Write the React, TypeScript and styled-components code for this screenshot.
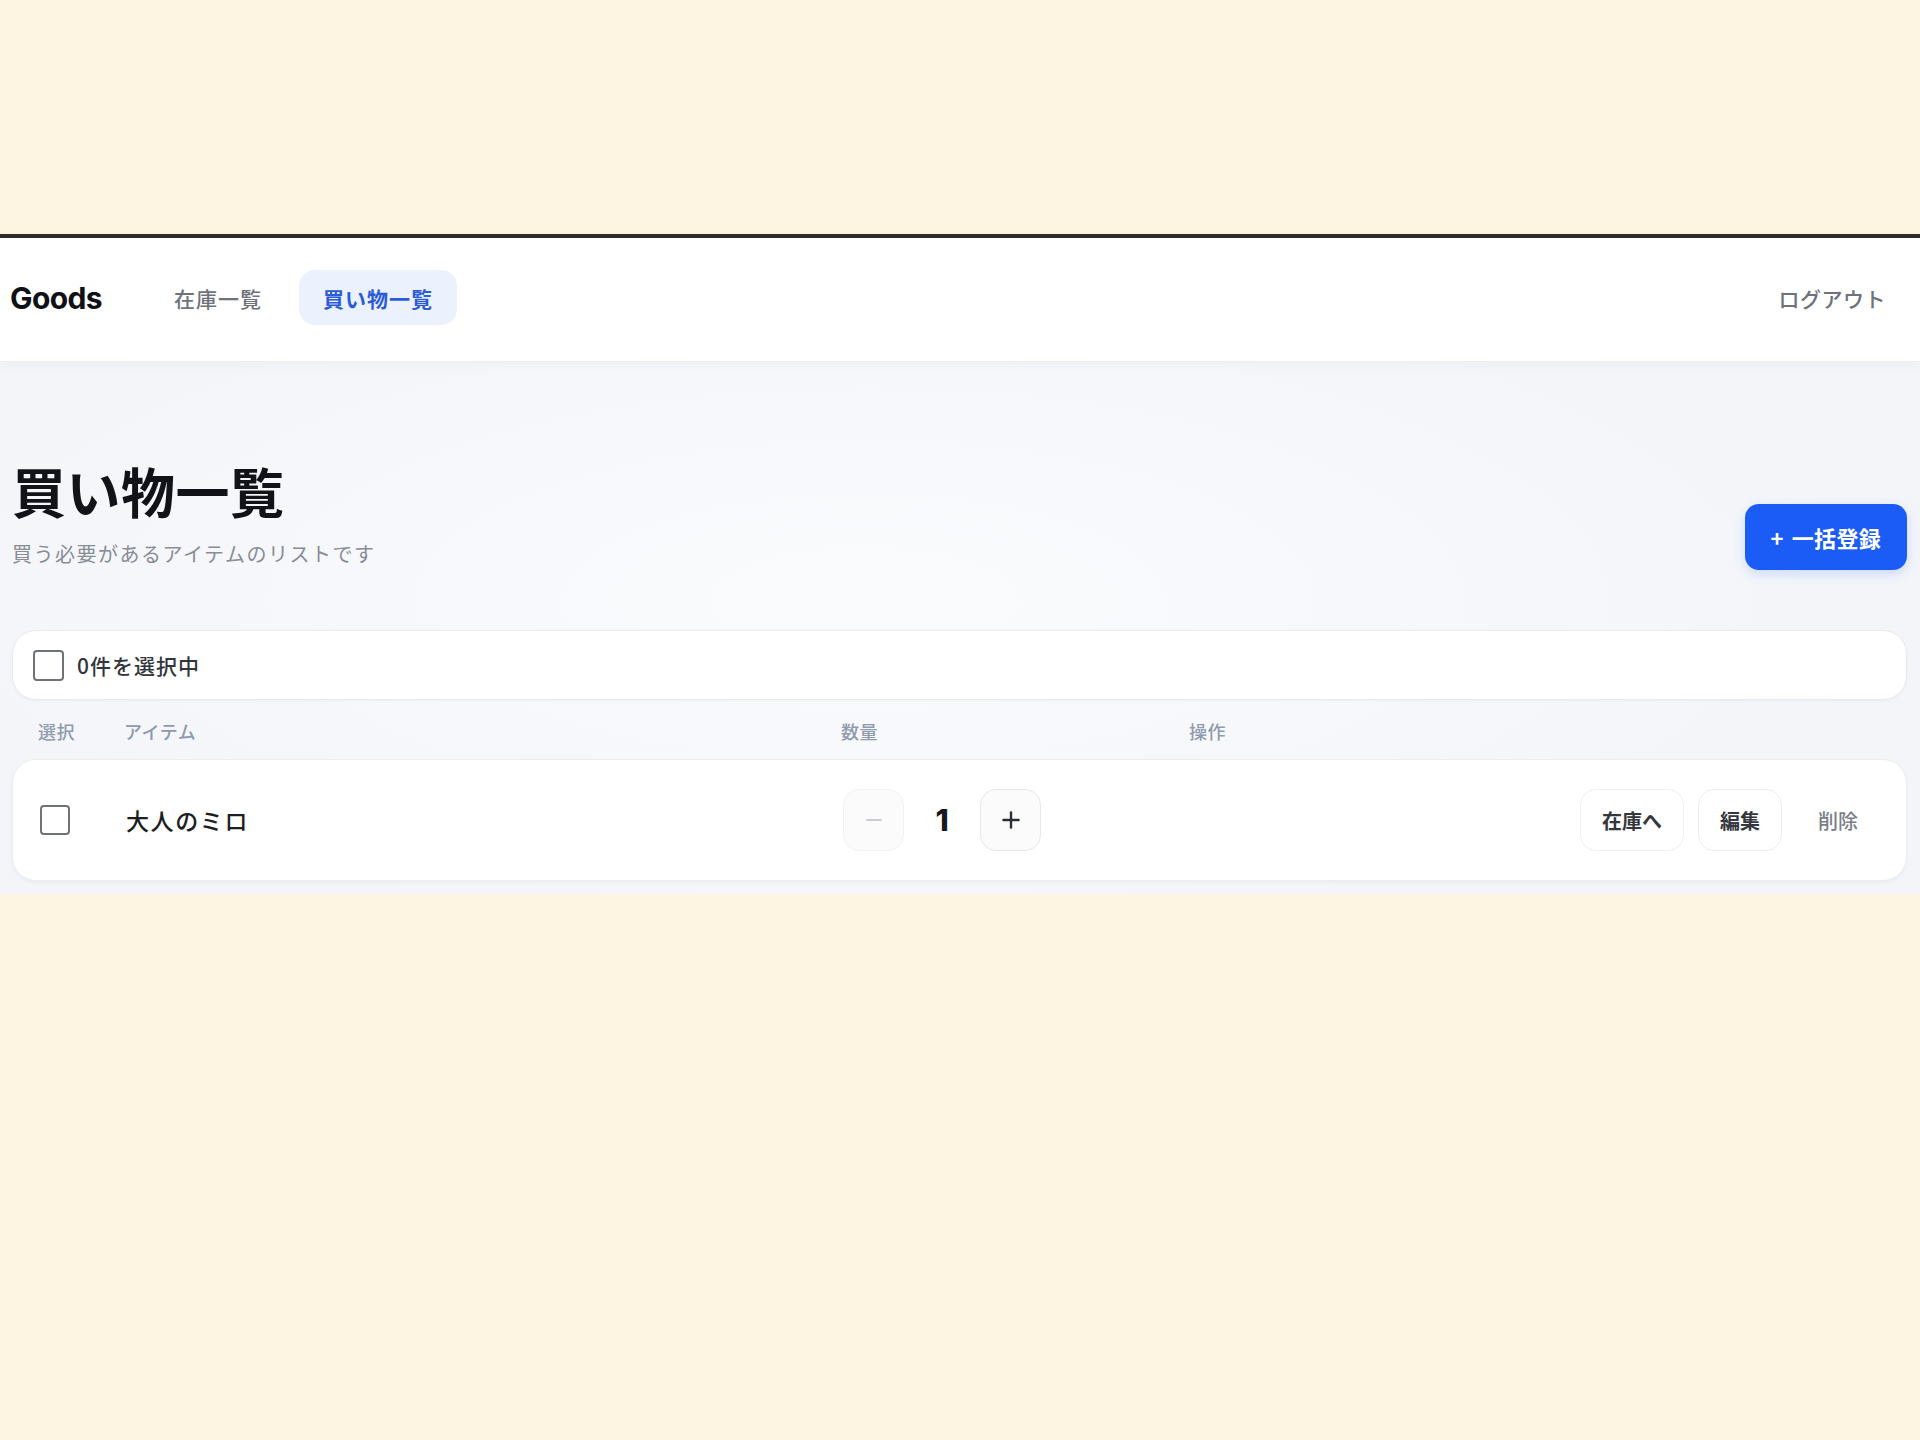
import React, { useState } from 'react';
import styled, { createGlobalStyle } from 'styled-components';
import { Minus, Plus } from 'lucide-react';

const GlobalStyle = createGlobalStyle`
	html, body {
		margin: 0;
		padding: 0;
		background: #fdf4e2;
	}
	body {
		font-family: Inter, 'Noto Sans CJK JP', 'Noto Sans', sans-serif;
		color: #1f2329;
		-webkit-font-smoothing: antialiased;
	}
	* {
		box-sizing: border-box;
	}
`;

const Page = styled.div`
	min-height: 1440px;
	padding-top: 234px;
`;

const Frame = styled.div`
	border-top: 4px solid #2e2e2e;
`;

const Header = styled.header`
	height: 124px;
	display: flex;
	align-items: center;
	padding: 0 12px 4px 10px;
	background: #ffffff;
	border-bottom: 1px solid #eceef2;
	box-shadow: 0 2px 14px rgba(30, 40, 70, 0.04);
	position: relative;
	z-index: 1;
`;

const Brand = styled.div`
	font-family: Inter, 'Noto Sans CJK JP', sans-serif;
	font-size: 30px;
	font-weight: 700;
	letter-spacing: -0.6px;
	color: #0f1115;
`;

const Nav = styled.nav`
	display: flex;
	gap: 13px;
	margin-left: 48px;
`;

const NavLink = styled.a<{ $active?: boolean }>`
	display: flex;
	align-items: center;
	height: 55px;
	padding: 0 24px;
	border-radius: 16px;
	font-family: 'Noto Sans CJK JP', sans-serif;
	font-size: 21px;
	letter-spacing: 1px;
	font-weight: ${({ $active }) => ($active ? 600 : 500)};
	color: ${({ $active }) => ($active ? '#2c5bd8' : '#6d727b')};
	background: ${({ $active }) => ($active ? '#ebf2fe' : 'transparent')};
	text-decoration: none;
	cursor: pointer;
`;

const Logout = styled.button`
	margin-left: auto;
	height: 55px;
	padding: 0 22px;
	border: none;
	background: transparent;
	font-family: 'Noto Sans CJK JP', sans-serif;
	font-size: 21px;
	font-weight: 500;
	letter-spacing: 0.5px;
	color: #6d727b;
	cursor: pointer;
`;

const Main = styled.main`
	padding: 0 13px 13px 12px;
	background: radial-gradient(ellipse 70% 90% at 45% 45%, #fafbfd 0%, #f3f5f9 75%);
`;

const TitleRow = styled.div`
	display: flex;
	justify-content: space-between;
	align-items: flex-end;
	padding-top: 96px;
`;

const TitleBlock = styled.div`
	display: flex;
	flex-direction: column;
`;

const Title = styled.h1`
	margin: 0;
	font-family: 'Noto Sans CJK JP', sans-serif;
	font-size: 54px;
	font-weight: 700;
	line-height: 66px;
	letter-spacing: 0.5px;
	color: #111318;
`;

const Subtitle = styled.p`
	margin: 14px 0 0;
	font-family: 'Noto Sans CJK JP', sans-serif;
	font-size: 20px;
	line-height: 32px;
	letter-spacing: 1.5px;
	color: #888d96;
`;

const PrimaryButton = styled.button`
	height: 66px;
	display: flex;
	align-items: center;
	padding: 0 26px;
	border: none;
	border-radius: 14px;
	background: #1c5cf6;
	color: #ffffff;
	font-family: 'Noto Sans CJK JP', sans-serif;
	font-size: 22px;
	font-weight: 700;
	letter-spacing: 0.3px;
	box-shadow: 0 4px 12px rgba(28, 92, 246, 0.18);
	cursor: pointer;
`;

const PlusMark = styled.span`
	margin-right: 8px;
	font-weight: 600;
`;

const SelectBar = styled.div`
	margin-top: 60px;
	height: 70px;
	display: flex;
	align-items: center;
	gap: 13px;
	padding: 0 20px;
	background: #ffffff;
	border: 1px solid #e9ebf0;
	border-radius: 24px;
	box-shadow: 0 1px 3px rgba(20, 30, 60, 0.04);
`;

const Check = styled.input.attrs({ type: 'checkbox' })<{ $size: number }>`
	appearance: none;
	margin: 0;
	width: ${({ $size }) => $size}px;
	height: ${({ $size }) => $size}px;
	border: 2px solid #6f7277;
	border-radius: 4px;
	background: #ffffff;
	cursor: pointer;

	&:checked {
		background: #1c5cf6;
		border-color: #1c5cf6;
	}
`;

const SelectLabel = styled.span`
	font-family: 'Noto Sans CJK JP', sans-serif;
	font-size: 21px;
	font-weight: 500;
	letter-spacing: 1px;
	color: #33363c;
`;

const columns = '86px 717px 348px 1fr';

const HeadRow = styled.div`
	margin-top: 14px;
	height: 34px;
	display: grid;
	grid-template-columns: ${columns};
	align-items: center;
	padding: 0 26px;
`;

const HeadCell = styled.span`
	font-family: 'Noto Sans CJK JP', sans-serif;
	font-size: 18px;
	font-weight: 500;
	letter-spacing: 0.5px;
	color: #8f9aae;
`;

const ItemCard = styled.div`
	margin-top: 11px;
	height: 122px;
	display: grid;
	grid-template-columns: ${columns};
	align-items: center;
	padding: 0 26px 0 27px;
	background: #ffffff;
	border: 1px solid #eceef2;
	border-radius: 24px;
	box-shadow: 0 2px 4px rgba(20, 30, 60, 0.04);
`;

const ItemName = styled.span`
	font-family: 'Noto Sans CJK JP', sans-serif;
	font-size: 23px;
	font-weight: 500;
	letter-spacing: 1.6px;
	color: #1c1e22;
`;

const Stepper = styled.div`
	display: flex;
	align-items: center;
	gap: 16px;
`;

const StepButton = styled.button<{ $muted?: boolean }>`
	width: 61px;
	height: 62px;
	display: flex;
	align-items: center;
	justify-content: center;
	padding: 0;
	border-radius: 16px;
	border: 1px solid ${({ $muted }) => ($muted ? '#f1f2f4' : '#e6e8ec')};
	background: #fbfbfc;
	color: ${({ $muted }) => ($muted ? '#c9cdd3' : '#2a2d33')};
	cursor: ${({ $muted }) => ($muted ? 'default' : 'pointer')};
`;

const Count = styled.span`
	min-width: 44px;
	text-align: center;
	font-family: Inter, sans-serif;
	font-size: 30px;
	font-weight: 800;
	color: #16181c;
`;

const Actions = styled.div`
	display: flex;
	justify-content: flex-end;
	gap: 14px;
`;

const ActionButton = styled.button<{ $plain?: boolean }>`
	height: 62px;
	padding: 0 21px;
	border-radius: 16px;
	border: 1px solid ${({ $plain }) => ($plain ? 'transparent' : '#eceef1')};
	background: #ffffff;
	font-family: 'Noto Sans CJK JP', sans-serif;
	font-size: 20px;
	font-weight: ${({ $plain }) => ($plain ? 500 : 600)};
	color: ${({ $plain }) => ($plain ? '#7a7e86' : '#34373d')};
	cursor: pointer;
`;

interface ShoppingItem {
	id: number;
	name: string;
	quantity: number;
}

const initialItems: ShoppingItem[] = [{ id: 1, name: '大人のミロ', quantity: 1 }];

export default function App() {
	const [items, setItems] = useState(initialItems);
	const [selected, setSelected] = useState<number[]>([]);

	const toggle = (id: number) =>
		setSelected((prev) => (prev.includes(id) ? prev.filter((v) => v !== id) : [...prev, id]));

	const changeQty = (id: number, diff: number) =>
		setItems((prev) =>
			prev.map((it) => (it.id === id ? { ...it, quantity: Math.max(1, it.quantity + diff) } : it)),
		);

	return (
		<>
			<GlobalStyle />
			<Page>
				<Frame>
					<Header>
						<Brand>Goods</Brand>
						<Nav>
							<NavLink>在庫一覧</NavLink>
							<NavLink $active>買い物一覧</NavLink>
						</Nav>
						<Logout>ログアウト</Logout>
					</Header>
					<Main>
						<TitleRow>
							<TitleBlock>
								<Title>買い物一覧</Title>
								<Subtitle>買う必要があるアイテムのリストです</Subtitle>
							</TitleBlock>
							<PrimaryButton>
								<PlusMark>+</PlusMark>一括登録
							</PrimaryButton>
						</TitleRow>

						<SelectBar>
							<Check
								$size={31}
								checked={items.length > 0 && selected.length === items.length}
								onChange={() => setSelected(selected.length ? [] : items.map((i) => i.id))}
							/>
							<SelectLabel>{selected.length}件を選択中</SelectLabel>
						</SelectBar>

						<HeadRow>
							<HeadCell>選択</HeadCell>
							<HeadCell>アイテム</HeadCell>
							<HeadCell>数量</HeadCell>
							<HeadCell>操作</HeadCell>
						</HeadRow>

						{items.map((item) => (
							<ItemCard key={item.id}>
								<Check $size={30} checked={selected.includes(item.id)} onChange={() => toggle(item.id)} />
								<ItemName>{item.name}</ItemName>
								<Stepper>
									<StepButton $muted={item.quantity <= 1} onClick={() => changeQty(item.id, -1)}>
										<Minus size={24} strokeWidth={1.8} />
									</StepButton>
									<Count>{item.quantity}</Count>
									<StepButton onClick={() => changeQty(item.id, 1)}>
										<Plus size={26} strokeWidth={2.2} />
									</StepButton>
								</Stepper>
								<Actions>
									<ActionButton>在庫へ</ActionButton>
									<ActionButton>編集</ActionButton>
									<ActionButton $plain>削除</ActionButton>
								</Actions>
							</ItemCard>
						))}
					</Main>
				</Frame>
			</Page>
		</>
	);
}
